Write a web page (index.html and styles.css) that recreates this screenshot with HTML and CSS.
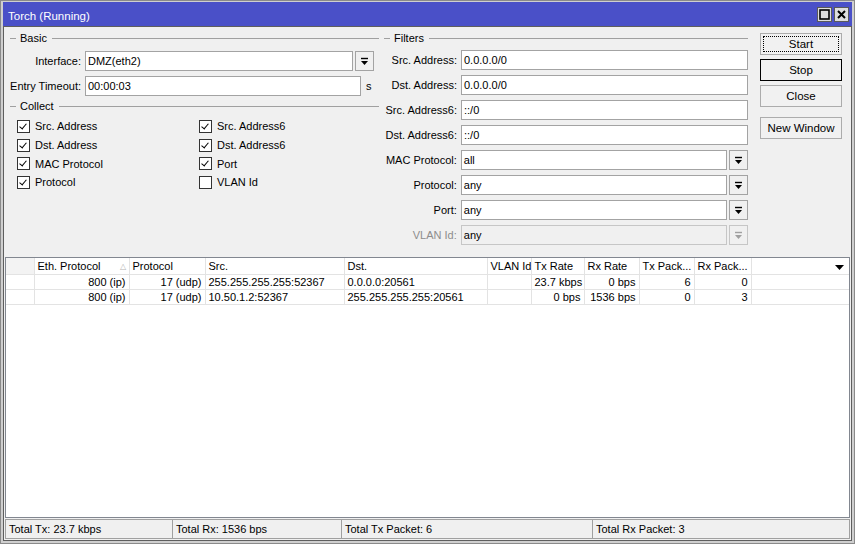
FILE: index.html
```html
<!DOCTYPE html>
<html lang="en">
  <head>
    <meta charset="UTF-8" />
    <title>Torch (Running)</title>
    <link rel="stylesheet" href="styles.css">
  </head>
  <body>
    <div class="window">
      <div class="titlebar">
        <span class="title">Torch (Running)</span>
        <div class="title-btns">
          <span class="tbtn">
            <svg width="11" height="11" viewBox="0 0 11 11"><rect x="1" y="1" width="9" height="9" fill="none" stroke="#000" stroke-width="1.6"/></svg>
          </span>
          <span class="tbtn">
            <svg width="11" height="11" viewBox="0 0 11 11"><path d="M2 2 L9 9 M9 2 L2 9" stroke="#000" stroke-width="2"/></svg>
          </span>
        </div>
      </div>

      <div class="content">
        <div class="top">
          <div class="left">
            <div class="group-title"><span>Basic</span></div>
            <div class="row">
              <label>Interface:</label>
              <div class="field w-iface">DMZ(eth2)</div>
              <span class="drop"><svg width="9" height="9" viewBox="0 0 9 9"><path d="M1 1.5 H8" stroke="#000" stroke-width="1.4"/><path d="M1 4 H8 L4.5 8 Z" fill="#000"/></svg></span>
            </div>
            <div class="row">
              <label>Entry Timeout:</label>
              <div class="field w-timeout">00:00:03</div>
              <span class="unit">s</span>
            </div>
            <div class="group-title collect"><span>Collect</span></div>
            <div class="checks">
              <div class="check on"><i></i>Src. Address</div>
              <div class="check on"><i></i>Src. Address6</div>
              <div class="check on"><i></i>Dst. Address</div>
              <div class="check on"><i></i>Dst. Address6</div>
              <div class="check on"><i></i>MAC Protocol</div>
              <div class="check on"><i></i>Port</div>
              <div class="check on"><i></i>Protocol</div>
              <div class="check"><i></i>VLAN Id</div>
            </div>
          </div>

          <div class="filters">
            <div class="group-title"><span>Filters</span></div>
            <div class="row"><label>Src. Address:</label><div class="field w-full">0.0.0.0/0</div></div>
            <div class="row"><label>Dst. Address:</label><div class="field w-full">0.0.0.0/0</div></div>
            <div class="row"><label>Src. Address6:</label><div class="field w-full">::/0</div></div>
            <div class="row"><label>Dst. Address6:</label><div class="field w-full">::/0</div></div>
            <div class="row">
              <label>MAC Protocol:</label><div class="field w-sel">all</div>
              <span class="drop"><svg width="9" height="9" viewBox="0 0 9 9"><path d="M1 1.5 H8" stroke="#000" stroke-width="1.4"/><path d="M1 4 H8 L4.5 8 Z" fill="#000"/></svg></span>
            </div>
            <div class="row">
              <label>Protocol:</label><div class="field w-sel">any</div>
              <span class="drop"><svg width="9" height="9" viewBox="0 0 9 9"><path d="M1 1.5 H8" stroke="#000" stroke-width="1.4"/><path d="M1 4 H8 L4.5 8 Z" fill="#000"/></svg></span>
            </div>
            <div class="row">
              <label>Port:</label><div class="field w-sel">any</div>
              <span class="drop"><svg width="9" height="9" viewBox="0 0 9 9"><path d="M1 1.5 H8" stroke="#000" stroke-width="1.4"/><path d="M1 4 H8 L4.5 8 Z" fill="#000"/></svg></span>
            </div>
            <div class="row disabled">
              <label>VLAN Id:</label><div class="field w-sel">any</div>
              <span class="drop"><svg width="9" height="9" viewBox="0 0 9 9"><path d="M1 1.5 H8" stroke="#a0a0a0" stroke-width="1.4"/><path d="M1 4 H8 L4.5 8 Z" fill="#a0a0a0"/></svg></span>
            </div>
          </div>

          <div class="buttons">
            <button class="btn focus"><span>Start</span></button>
            <button class="btn default">Stop</button>
            <button class="btn">Close</button>
            <button class="btn gap">New Window</button>
          </div>
        </div>

        <div class="grid">
          <table>
            <colgroup>
              <col style="width:28px"><col style="width:95px"><col style="width:76px"><col style="width:139px">
              <col style="width:143px"><col style="width:44px"><col style="width:53px"><col style="width:55px">
              <col style="width:55px"><col style="width:57px"><col>
            </colgroup>
            <thead>
              <tr>
                <th class="blank"></th>
                <th>Eth. Protocol <span class="sort">&#9651;</span></th>
                <th>Protocol</th>
                <th>Src.</th>
                <th>Dst.</th>
                <th>VLAN Id</th>
                <th>Tx Rate</th>
                <th>Rx Rate</th>
                <th>Tx Pack...</th>
                <th>Rx Pack...</th>
                <th class="menu"><svg width="9" height="5" viewBox="0 0 9 5"><path d="M0 0 H9 L4.5 5 Z" fill="#000"/></svg></th>
              </tr>
            </thead>
            <tbody>
              <tr>
                <td></td><td class="r">800 (ip)</td><td class="r">17 (udp)</td><td>255.255.255.255:52367</td>
                <td>0.0.0.0:20561</td><td></td><td class="r">23.7 kbps</td><td class="r">0 bps</td>
                <td class="r">6</td><td class="r">0</td><td class="end"></td>
              </tr>
              <tr>
                <td></td><td class="r">800 (ip)</td><td class="r">17 (udp)</td><td>10.50.1.2:52367</td>
                <td>255.255.255.255:20561</td><td></td><td class="r">0 bps</td><td class="r">1536 bps</td>
                <td class="r">0</td><td class="r">3</td><td class="end"></td>
              </tr>
            </tbody>
          </table>
        </div>

        <div class="status">
          <div class="cell c1">Total Tx: 23.7 kbps</div>
          <div class="cell c2">Total Rx: 1536 bps</div>
          <div class="cell c3">Total Tx Packet: 6</div>
          <div class="cell c4">Total Rx Packet: 3</div>
        </div>
      </div>
    </div>
  </body>
</html>
```

FILE: styles.css
```css
* {
  box-sizing: border-box;
}
body {
  margin: 0;
  font-family: "Liberation Sans", Arial, sans-serif;
  font-size: 11px;
  color: #000;
  background: #c8c8c8;
}
.window {
  width: 855px;
  height: 544px;
  border: 1px solid #8a8a8a;
  padding: 1px 2px 2px 2px;
  background: #cfcfcf;
  display: flex;
  flex-direction: column;
}
.titlebar {
  height: 24px;
  background: #4a50c8;
  display: flex;
  align-items: center;
  justify-content: space-between;
  padding: 1px 3px 0 5px;
  flex: none;
}
.title {
  color: #fff;
  font-size: 11.5px;
  margin-top: 3px;
}
.title-btns {
  display: flex;
  gap: 2px;
}
.tbtn {
  width: 15px;
  height: 15px;
  background: #dedede;
  border: 1px solid #5a5a5a;
  display: flex;
  align-items: center;
  justify-content: center;
}
.content {
  flex: 1;
  background: #f0f0f0;
  border: 1px solid #5e5e5e;
  padding: 0 1px 1px 1px;
  display: flex;
  flex-direction: column;
}

/* top form area */
.top {
  display: flex;
  height: 230px;
  padding: 4px 0 0 4px;
  flex: none;
}
.left {
  width: 370px;
}
.filters {
  width: 365px;
  margin-left: 4px;
}
.group-title {
  display: flex;
  align-items: center;
  height: 14px;
}
.group-title::before {
  content: "";
  width: 6px;
  border-top: 1px solid #a0a0a0;
  margin-right: 4px;
  margin-left: 1px;
}
.group-title::after {
  content: "";
  flex: 1;
  border-top: 1px solid #a0a0a0;
  margin-left: 5px;
}
.group-title.collect {
  margin-top: 3px;
}
.row {
  display: flex;
  align-items: center;
  height: 20px;
  margin-top: 5px;
}
.group-title + .row {
  margin-top: 6px;
}
.filters .group-title + .row {
  margin-top: 5px;
}
.row label {
  width: 72px;
  text-align: right;
  margin-right: 4px;
  white-space: nowrap;
}
.filters .row label {
  width: 74px;
}
.field {
  height: 20px;
  background: #fff;
  border: 1px solid #a3a3a3;
  padding: 0 2px;
  line-height: 18px;
  white-space: nowrap;
}
.w-iface {
  width: 268px;
}
.w-timeout {
  width: 276px;
}
.w-full {
  width: 287px;
}
.w-sel {
  width: 267px;
}
.drop {
  width: 19px;
  height: 20px;
  margin-left: 2px;
  background: #f0f0f0;
  border: 1px solid #a3a3a3;
  display: flex;
  align-items: center;
  justify-content: center;
}
.unit {
  margin-left: 5px;
}
.disabled label {
  color: #8d8d8d;
}
.disabled .field {
  background: #f0f0f0;
  border-color: #c6c6c6;
}
.disabled .drop {
  border-color: #c6c6c6;
}

.checks {
  display: grid;
  grid-template-columns: 182px 1fr;
  grid-auto-rows: 18.7px;
  padding-left: 8px;
  margin-top: 4px;
}
.check {
  display: flex;
  align-items: center;
}
.check i {
  width: 13px;
  height: 13px;
  border: 1px solid #333;
  background: #fff;
  margin-right: 5px;
  position: relative;
}
.check.on i::after {
  content: "";
  position: absolute;
  left: 3px;
  top: 1px;
  width: 3px;
  height: 6px;
  border: solid #000;
  border-width: 0 1.6px 1.6px 0;
  transform: rotate(40deg);
}

.buttons {
  margin-left: 12px;
  padding-top: 2px;
  display: flex;
  flex-direction: column;
  gap: 4px;
}
.btn {
  width: 82px;
  height: 22px;
  font-family: inherit;
  font-size: 11.5px;
  background: #f1f1f1;
  border: 1px solid #acacac;
  padding: 0;
  color: #000;
}
.btn.focus {
  padding: 2px;
}
.btn.focus span {
  display: block;
  height: 100%;
  border: 1px dotted #000;
  line-height: 15px;
}
.btn.default {
  border: 1px solid #000;
}
.btn.gap {
  margin-top: 6px;
}

/* table */
.grid {
  height: 261px;
  background: #fff;
  border: 1px solid #828790;
  width: 845px;
  flex: none;
}
table {
  width: 100%;
  border-collapse: collapse;
  table-layout: fixed;
}
th {
  height: 16px;
  font-weight: normal;
  text-align: left;
  padding: 0 3px;
  border-right: 1px solid #e3e3e3;
  border-bottom: 1px solid #e3e3e3;
  white-space: nowrap;
  overflow: hidden;
  background: #fff;
}
th.blank {
  background: #f3f3f3;
}
th .sort {
  float: right;
  color: #b5b5b5;
  font-size: 8px;
  margin-top: 2px;
}
th.menu {
  text-align: right;
  padding-right: 5px;
  border-right: none;
}
td {
  height: 15px;
  padding: 0 3px;
  border-right: 1px solid #e3e3e3;
  border-bottom: 1px solid #e3e3e3;
  white-space: nowrap;
  overflow: hidden;
}
td.r {
  text-align: right;
}
td.end {
  border-right: none;
}

/* status bar */
.status {
  display: flex;
  height: 20px;
  margin-top: 1px;
  width: 845px;
  flex: none;
}
.cell {
  border: 1px solid #a0a0a0;
  border-left: none;
  padding: 0 3px;
  line-height: 18px;
}
.cell.c1 {
  border-left: 1px solid #a0a0a0;
  width: 168px;
}
.cell.c2 {
  width: 169px;
}
.cell.c3 {
  width: 251px;
}
.cell.c4 {
  flex: 1;
}
```
